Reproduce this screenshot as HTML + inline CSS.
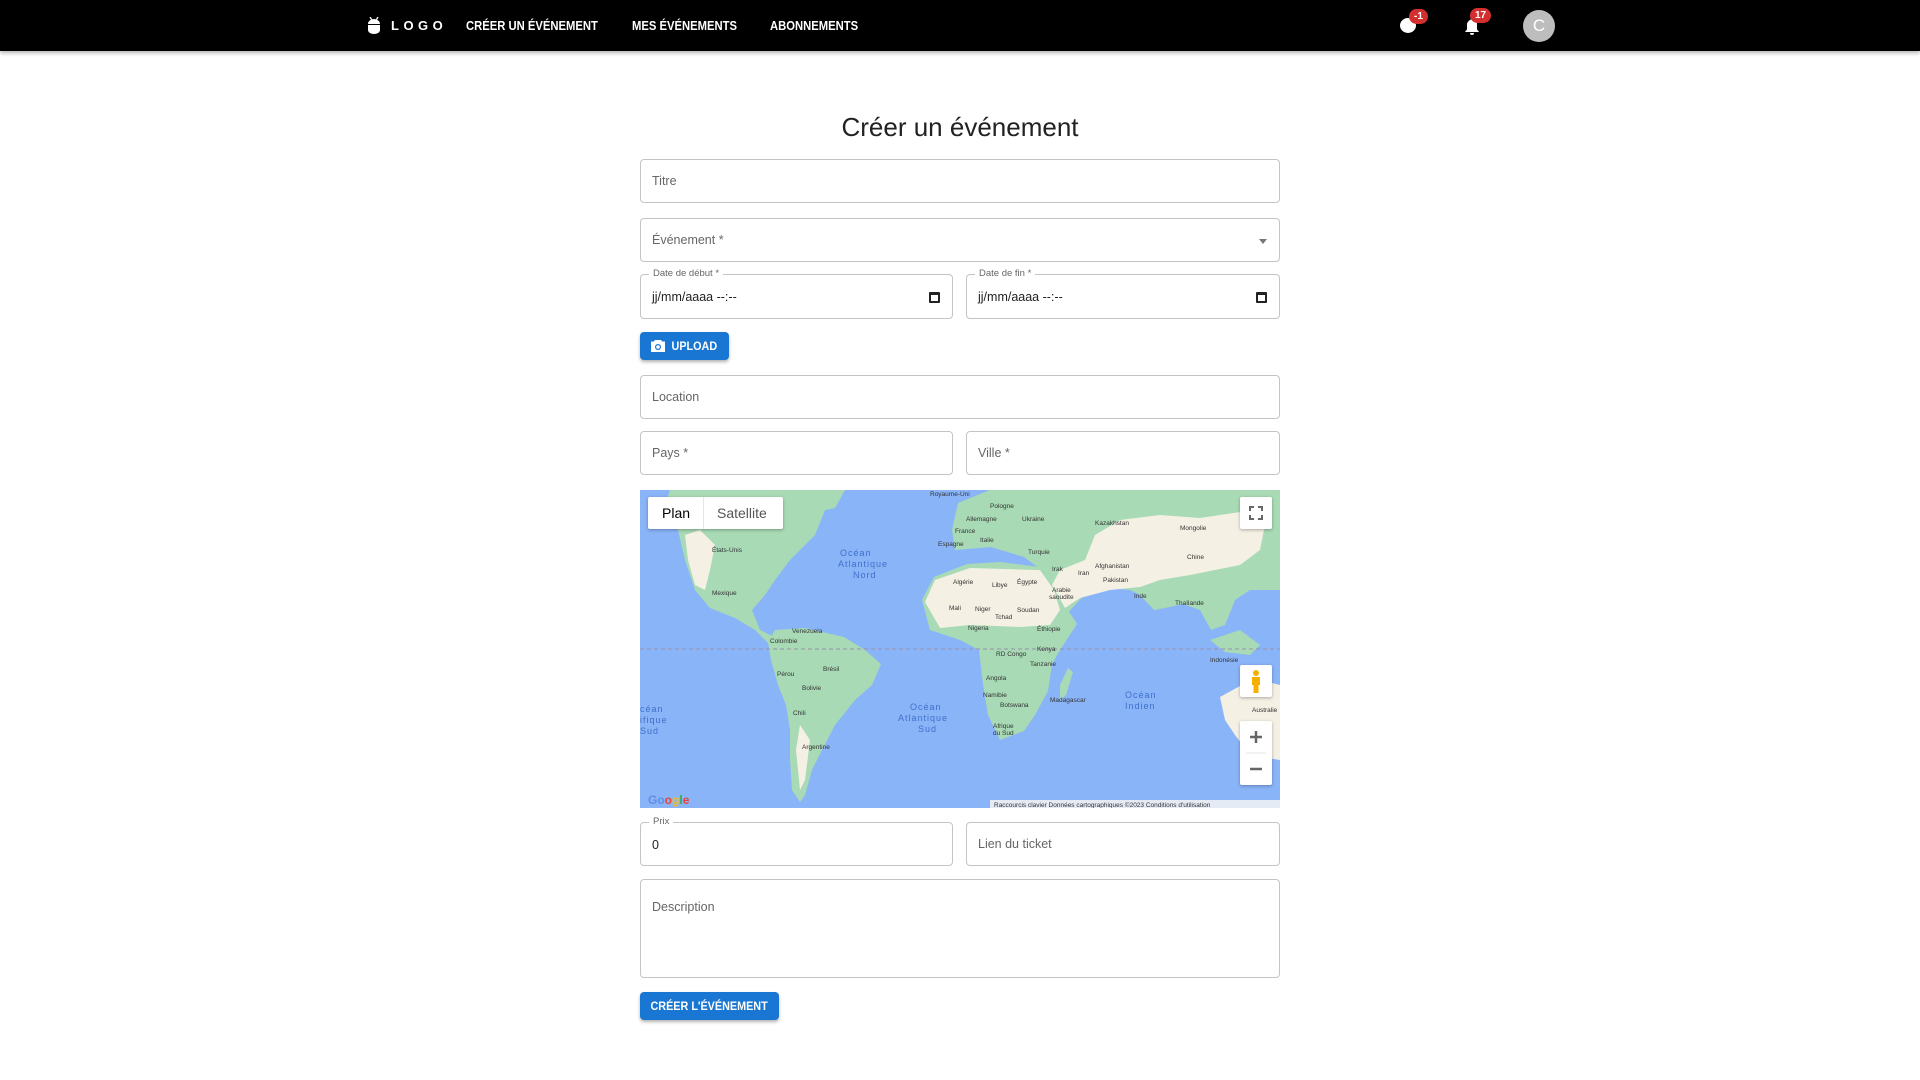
<!DOCTYPE html>
<html><head><meta charset="utf-8">
<style>
*{box-sizing:border-box;margin:0;padding:0}
body{width:1920px;height:1080px;background:#fff;font-family:"Liberation Sans",sans-serif;position:relative;overflow:hidden}
.hdr{position:absolute;left:0;top:0;width:1920px;height:51px;background:#000;box-shadow:0 2px 4px rgba(0,0,0,.3)}
.nav{position:absolute;top:19px;color:#fff;font-weight:bold;font-size:12.5px;transform:scaleX(.9);transform-origin:left}
.logo{position:absolute;left:391px;top:18px;color:#fff;font-weight:bold;font-size:13px;letter-spacing:4.5px}
.badge{position:absolute;background:#d32f2f;color:#fff;font-size:10px;font-weight:bold;border-radius:9px;height:15px;line-height:15px;padding:0 5px;text-align:center}
.av{position:absolute;left:1523px;top:10px;width:32px;height:32px;border-radius:50%;background:#bdbdbd;color:#fff;font-size:17px;text-align:center;line-height:32px}
h1{position:absolute;left:0;width:1920px;top:112px;text-align:center;font-weight:normal;font-size:26px;color:#222}
.f{position:absolute;border:1px solid #c4c4c4;border-radius:4px;background:#fff}
.ph{position:absolute;left:11px;font-size:12.5px;color:#666}
.lab{position:absolute;left:8px;top:-7px;background:#fff;padding:0 4px;font-size:9.5px;color:#666}
.val{position:absolute;left:11px;font-size:12.5px;color:#222}
.btn{position:absolute;background:#1976d2;color:#fff;font-weight:bold;font-size:12px;border-radius:4px;box-shadow:0 2px 3px rgba(0,0,0,.3);text-align:center}
.btn span.t{display:inline-block;transform:scaleX(.9)}
.cal{position:absolute;right:12px;top:17px;width:11px;height:11px;border:2px solid #222;border-top-width:3px;border-radius:1px}
.map{position:absolute;left:640px;top:490px;width:640px;height:318px;overflow:hidden;background:#8ab4f8}
.ml{font-family:"Liberation Sans",sans-serif;font-size:6.5px;fill:#333}
.oc{font-family:"Liberation Sans",sans-serif;font-size:9px;fill:#3f6fc9;letter-spacing:1px}
</style></head><body>
<div class="hdr">
 <svg style="position:absolute;left:367px;top:17px" width="14" height="17" viewBox="0 0 14 17"><path d="M3 0l1.5 2.5M11 0l-1.5 2.5" stroke="#fff" stroke-width="1.3"/><path d="M1 7a6 5 0 0 1 12 0z" fill="#fff"/><path d="M1 8h12v5a6 4 0 0 1-12 0z" fill="#fff"/></svg>
 <div class="logo">LOGO</div>
 <div class="nav" style="left:466px">CRÉER UN ÉVÉNEMENT</div>
 <div class="nav" style="left:632px">MES ÉVÉNEMENTS</div>
 <div class="nav" style="left:770px">ABONNEMENTS</div>
 <div style="position:absolute;left:1400px;top:18px;width:16px;height:15px;border-radius:50%;background:#fff"></div>
 <div class="badge" style="left:1409px;top:9px">-1</div>
 <svg style="position:absolute;left:1464px;top:17px" width="16" height="18" viewBox="0 0 16 18"><path d="M8 1a1.3 1.3 0 0 1 1.3 1.3v.5A5 5 0 0 1 13 8v4.5l1.7 1.7V15H1.3v-.8L3 12.5V8a5 5 0 0 1 3.7-5.2v-.5A1.3 1.3 0 0 1 8 1zM6 16h4a2 2 0 0 1-4 0z" fill="#fff"/></svg>
 <div class="badge" style="left:1470px;top:8px">17</div>
 <div class="av">C</div>
</div>
<h1>Créer un événement</h1>

<div class="f" style="left:640px;top:159px;width:640px;height:44px"><div class="ph" style="top:14px">Titre</div></div>
<div class="f" style="left:640px;top:218px;width:640px;height:44px"><div class="ph" style="top:14px">Événement *</div>
 <div style="position:absolute;right:12px;top:20px;border-left:4px solid transparent;border-right:4px solid transparent;border-top:5px solid #777"></div></div>

<div class="f" style="left:640px;top:274px;width:313px;height:45px"><div class="lab">Date de début *</div><div class="val" style="top:15px">jj/mm/aaaa --:--</div><div class="cal"></div></div>
<div class="f" style="left:966px;top:274px;width:314px;height:45px"><div class="lab">Date de fin *</div><div class="val" style="top:15px">jj/mm/aaaa --:--</div><div class="cal"></div></div>

<div class="btn" style="left:640px;top:332px;width:89px;height:28px;line-height:28px;padding-left:20px"><span class="t">UPLOAD</span>
 <svg style="position:absolute;left:11px;top:8px" width="14" height="12" viewBox="0 0 14 12"><path d="M4 0h6l1.2 1.5H14V12H0V1.5h2.8z" fill="#fff"/><circle cx="7" cy="7" r="3" fill="#1976d2"/><circle cx="7" cy="7" r="1.8" fill="#fff"/></svg></div>

<div class="f" style="left:640px;top:375px;width:640px;height:44px"><div class="ph" style="top:14px">Location</div></div>
<div class="f" style="left:640px;top:431px;width:313px;height:44px"><div class="ph" style="top:14px">Pays *</div></div>
<div class="f" style="left:966px;top:431px;width:314px;height:44px"><div class="ph" style="top:14px">Ville *</div></div>

<div class="map">
<svg width="640" height="318" viewBox="0 0 640 318">
 <g fill="#a8dab5">
  <path d="M30 0H195L185 20 175 45 150 70 135 90 125 105 112 120 120 140 140 150 150 160 135 160 115 140 95 128 70 118 55 100 45 70 38 40 25 15z"/>
  <path d="M150 0H205L195 18 175 22 160 8z"/>
  <path d="M135 140L165 138 204 147 225 160 241 174 232 195 215 210 195 235 182 260 172 280 165 305 160 312 152 300 150 270 150 240 146 215 138 195 131 170 128 152z"/>
  <path d="M282 110L294 87 327 74 360 72 400 77 415 100 437 134 420 160 412 174 408 201 395 225 384 241 360 250 348 225 343 194 339 160 320 150 290 140z"/>
  <path d="M315 60L312 40 318 13 350 0H640V100L610 100 595 110 585 135 571 140 560 120 543 114 525 118 514 120 500 105 490 100 470 98 449 100 435 115 424 127 410 105 404 82 384 67 351 57z"/>
  <path d="M420 195L428 178 433 182 426 205 420 210z"/>
  <path d="M570 150L600 140 620 155 610 165 585 162z"/>
  <path d="M628 55L634 50 638 62 632 70z"/>
 </g>
 <g fill="#f5f0e4">
  <path d="M45 45L60 40 75 55 70 80 65 100 55 95 48 70z"/>
  <path d="M285 112L295 90 330 78 400 80 414 100 420 120 410 135 380 137 330 135 300 138z"/>
  <path d="M412 95L420 80 445 70 455 45 480 30 520 25 560 28 600 22 625 35 620 60 600 75 575 80 550 85 520 90 500 97 470 100 440 108 425 118z"/>
  <path d="M580 207L600 196 620 190 640 195V270L610 265 595 245 585 230z"/>
  <path d="M160 235L170 250 165 290 160 300 156 260z"/>
 </g>
 <line x1="0" y1="159" x2="640" y2="159" stroke="#9d8fa8" stroke-width="1" stroke-dasharray="4 3"/>
 <text class="oc" x="200" y="66">Océan</text><text class="oc" x="198" y="77">Atlantique</text><text class="oc" x="213" y="88">Nord</text>
 <text class="oc" x="270" y="220">Océan</text><text class="oc" x="258" y="231">Atlantique</text><text class="oc" x="278" y="242">Sud</text>
 <text class="oc" x="485" y="208">Océan</text><text class="oc" x="485" y="219">Indien</text>
 <text class="oc" x="0" y="222">céan</text><text class="oc" x="0" y="233">ifique</text><text class="oc" x="0" y="244">Sud</text>
 <text class="ml" x="72" y="62">États-Unis</text><text class="ml" x="72" y="105">Mexique</text>
 <text class="ml" x="152" y="143">Venezuela</text><text class="ml" x="130" y="153">Colombie</text>
 <text class="ml" x="183" y="181">Brésil</text><text class="ml" x="137" y="186">Pérou</text><text class="ml" x="162" y="200">Bolivie</text>
 <text class="ml" x="153" y="225">Chili</text><text class="ml" x="162" y="259">Argentine</text>
 <text class="ml" x="290" y="6">Royaume-Uni</text><text class="ml" x="350" y="18">Pologne</text>
 <text class="ml" x="326" y="31">Allemagne</text><text class="ml" x="382" y="31">Ukraine</text>
 <text class="ml" x="315" y="43">France</text><text class="ml" x="340" y="52">Italie</text><text class="ml" x="298" y="56">Espagne</text>
 <text class="ml" x="388" y="64">Turquie</text><text class="ml" x="455" y="35">Kazakhstan</text><text class="ml" x="540" y="40">Mongolie</text>
 <text class="ml" x="412" y="81">Irak</text><text class="ml" x="438" y="85">Iran</text><text class="ml" x="455" y="78">Afghanistan</text>
 <text class="ml" x="463" y="92">Pakistan</text><text class="ml" x="547" y="69">Chine</text><text class="ml" x="494" y="108">Inde</text>
 <text class="ml" x="535" y="115">Thaïlande</text><text class="ml" x="313" y="94">Algérie</text><text class="ml" x="352" y="97">Libye</text>
 <text class="ml" x="377" y="94">Égypte</text><text class="ml" x="412" y="102">Arabie</text><text class="ml" x="409" y="109">saoudite</text>
 <text class="ml" x="309" y="120">Mali</text><text class="ml" x="335" y="121">Niger</text><text class="ml" x="377" y="122">Soudan</text>
 <text class="ml" x="355" y="129">Tchad</text><text class="ml" x="328" y="140">Nigeria</text><text class="ml" x="397" y="141">Éthiopie</text>
 <text class="ml" x="356" y="166">RD Congo</text><text class="ml" x="397" y="161">Kenya</text><text class="ml" x="390" y="176">Tanzanie</text>
 <text class="ml" x="346" y="190">Angola</text><text class="ml" x="343" y="207">Namibie</text><text class="ml" x="360" y="217">Botswana</text>
 <text class="ml" x="410" y="212">Madagascar</text><text class="ml" x="353" y="238">Afrique</text><text class="ml" x="353" y="245">du Sud</text>
 <text class="ml" x="570" y="172">Indonésie</text><text class="ml" x="612" y="222">Australie</text>
 <text x="8" y="314" style="font-family:'Liberation Sans',sans-serif;font-size:12px;font-weight:bold" fill="#5f8fe0">Go<tspan fill="#ea4335">o</tspan><tspan fill="#fbbc05">g</tspan><tspan fill="#34a853">l</tspan><tspan fill="#ea4335">e</tspan></text>
 <rect x="350" y="310" width="290" height="8" fill="#f5f5f5" opacity=".85"/>
 <text x="354" y="317" style="font-family:'Liberation Sans',sans-serif;font-size:6.5px" fill="#333">Raccourcis clavier   Données cartographiques ©2023   Conditions d'utilisation</text>
</svg>
 <div style="position:absolute;left:8px;top:7px;width:135px;height:32px;background:#fff;border-radius:2px;box-shadow:0 1px 3px rgba(0,0,0,.3);font-size:14px">
  <span style="position:absolute;left:14px;top:8px;color:#000">Plan</span>
  <span style="position:absolute;left:55px;top:0;width:1px;height:32px;background:#e6e6e6"></span>
  <span style="position:absolute;left:69px;top:8px;color:#555">Satellite</span></div>
 <div style="position:absolute;left:600px;top:7px;width:32px;height:32px;background:#fff;border-radius:2px;box-shadow:0 1px 3px rgba(0,0,0,.3)">
  <svg width="32" height="32" viewBox="0 0 32 32"><path d="M10 14v-4h4M18 10h4v4M22 18v4h-4M14 22h-4v-4" stroke="#666" stroke-width="2" fill="none"/></svg></div>
 <div style="position:absolute;left:600px;top:175px;width:32px;height:32px;background:#fff;border-radius:2px;box-shadow:0 1px 3px rgba(0,0,0,.3)">
  <svg width="32" height="32" viewBox="0 0 32 32"><circle cx="16" cy="8" r="3" fill="#f6b100"/><path d="M12 12h8v8h-1.5v8h-5v-8H12z" fill="#f6b100"/></svg></div>
 <div style="position:absolute;left:600px;top:231px;width:32px;height:64px;background:#fff;border-radius:2px;box-shadow:0 1px 3px rgba(0,0,0,.3)">
  <svg width="32" height="64" viewBox="0 0 32 64"><path d="M10 16h12M16 10v12M10 48h12" stroke="#666" stroke-width="2.5"/><line x1="6" y1="32" x2="26" y2="32" stroke="#e6e6e6"/></svg></div>
</div>

<div class="f" style="left:640px;top:822px;width:313px;height:44px"><div class="lab">Prix</div><div class="val" style="top:15px">0</div></div>
<div class="f" style="left:966px;top:822px;width:314px;height:44px"><div class="ph" style="top:14px">Lien du ticket</div></div>
<div class="f" style="left:640px;top:879px;width:640px;height:99px"><div class="ph" style="top:20px">Description</div></div>

<div class="btn" style="left:640px;top:992px;width:139px;height:28px;line-height:28px"><span class="t">CRÉER L'ÉVÉNEMENT</span></div>
</body></html>
